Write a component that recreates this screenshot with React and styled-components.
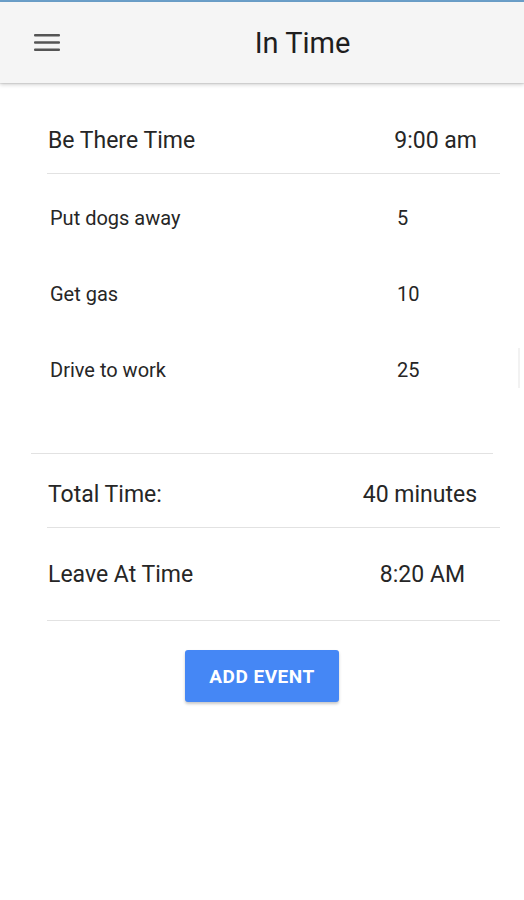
import React from "react";
import styled, { createGlobalStyle } from "styled-components";

const Global = createGlobalStyle`
  html, body { margin: 0; padding: 0; background: #ffffff; }
  body { font-family: Roboto, "Noto Sans", "Liberation Sans", sans-serif; color: #212121; overflow: hidden; }
  * { box-sizing: border-box; }
`;

const Screen = styled.div`
  position: relative;
  width: 524px;
  height: 900px;
  background: #fff;
  border-top: 2px solid #6b9fc9;
`;

const AppBar = styled.header`
  position: relative;
  z-index: 1;
  display: flex;
  align-items: center;
  height: 81px;
  background: #f5f5f5;
  box-shadow: 0 2px 4px rgba(0, 0, 0, 0.16), 0 1px 1px rgba(0, 0, 0, 0.08);
`;

const MenuButton = styled.div`
  width: 81px;
  display: flex;
  align-items: center;
  padding-left: 34px;
`;

const Title = styled.h1`
  flex: 1;
  margin: 0;
  text-align: center;
  font-size: 29px;
  font-weight: 400;
  color: #1e1e1e;
  line-height: 34px;
`;

const Content = styled.main`
  display: flex;
  flex-direction: column;
`;

const InfoRow = styled.div`
  display: flex;
  justify-content: space-between;
  align-items: center;
  margin: 0 24px 0 47px;
  padding: ${(p) => p.$pad};
  padding-left: 1px;
  padding-right: ${(p) => p.$right}px;
  font-size: 23px;
  line-height: 24px;
  color: #262626;
  border-bottom: 1px solid #e2e2e2;
`;

const EventList = styled.ul`
  list-style: none;
  margin: 0;
  padding: 6px 0 45px;
  border-bottom: 1px solid #e2e2e2;
  margin-left: 31px;
  margin-right: 31px;
`;

const EventItem = styled.li`
  display: grid;
  grid-template-columns: 347px 1fr;
  align-items: center;
  height: 76px;
  padding-left: 19px;
  font-size: 20px;
  color: #262626;
`;

const Actions = styled.div`
  display: flex;
  justify-content: center;
  padding-top: 29px;
`;

const AddButton = styled.button`
  width: 154px;
  height: 52px;
  border: none;
  border-radius: 3px;
  background: #4587f5;
  color: #fff;
  font-family: Roboto, "Liberation Sans", sans-serif;
  font-size: 19px;
  font-weight: 700;
  letter-spacing: 0.5px;
  box-shadow: 0 2px 3px rgba(0, 0, 0, 0.22);
  cursor: pointer;
`;

const ScrollHint = styled.div`
  position: absolute;
  right: 4px;
  top: 346px;
  width: 2px;
  height: 40px;
  background: #f2f2f2;
`;

const events = [
  { name: "Put dogs away", minutes: 5 },
  { name: "Get gas", minutes: 10 },
  { name: "Drive to work", minutes: 25 },
];

export default function App() {
  return (
    <>
      <Global />
      <Screen>
        <AppBar>
          <MenuButton>
            <svg width="26" height="18" viewBox="0 0 26 18">
              <rect x="0" y="0" width="26" height="2.6" rx="1" fill="#555" />
              <rect x="0" y="7.2" width="26" height="2.6" rx="1" fill="#555" />
              <rect x="0" y="14.4" width="26" height="2.6" rx="1" fill="#555" />
            </svg>
          </MenuButton>
          <Title>In Time</Title>
        </AppBar>
        <Content>
          <InfoRow $pad="46px 0 20px" $right={23}>
            <span>Be There Time</span>
            <span>9:00 am</span>
          </InfoRow>
          <EventList>
            {events.map((e) => (
              <EventItem key={e.name}>
                <span>{e.name}</span>
                <span>{e.minutes}</span>
              </EventItem>
            ))}
          </EventList>
          <InfoRow $pad="29px 0 20px" $right={23}>
            <span>Total Time:</span>
            <span>40 minutes</span>
          </InfoRow>
          <InfoRow $pad="35px 0 33px" $right={35}>
            <span>Leave At Time</span>
            <span>8:20 AM</span>
          </InfoRow>
          <Actions>
            <AddButton>ADD EVENT</AddButton>
          </Actions>
        </Content>
        <ScrollHint />
      </Screen>
    </>
  );
}
